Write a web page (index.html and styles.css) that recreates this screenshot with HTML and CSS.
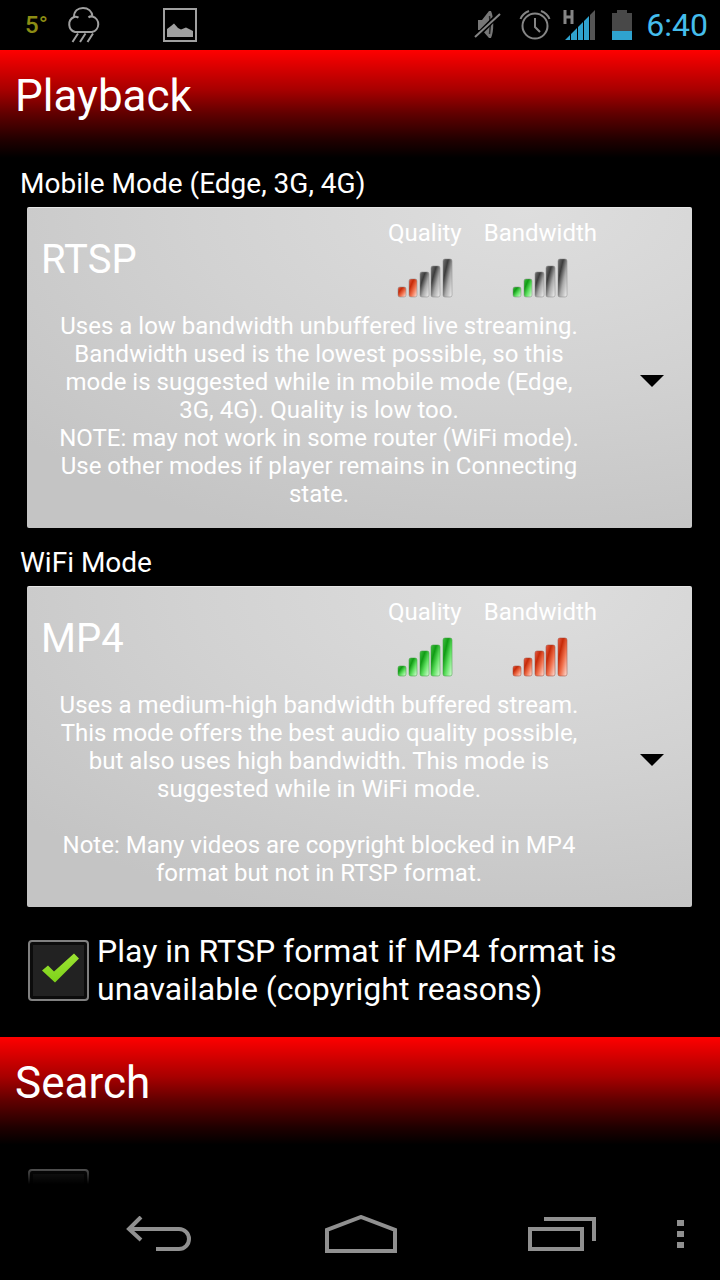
FILE: index.html
```html
<!DOCTYPE html>
<html lang="en">

<head>
  <meta charset="UTF-8" />
  <meta name="viewport" content="width=device-width, initial-scale=1.0" />
  <title>Settings</title>
  <link rel="stylesheet" href="styles.css">
</head>

<body>
  <!-- Shared gradients for the level bars -->
  <svg class="defs" width="0" height="0" aria-hidden="true">
    <defs>
      <linearGradient id="red" x1="0" y1="0" x2="1" y2="1">
        <stop offset="0" stop-color="#e8604a" />
        <stop offset="0.3" stop-color="#c62a08" />
        <stop offset="0.6" stop-color="#f0704c" />
        <stop offset="1" stop-color="#ffe4dc" />
      </linearGradient>
      <linearGradient id="green" x1="0" y1="0" x2="1" y2="1">
        <stop offset="0" stop-color="#45c045" />
        <stop offset="0.3" stop-color="#109c14" />
        <stop offset="0.6" stop-color="#5fe060" />
        <stop offset="1" stop-color="#dcffdc" />
      </linearGradient>
      <linearGradient id="grey" x1="0" y1="0" x2="1" y2="1">
        <stop offset="0" stop-color="#777" />
        <stop offset="0.3" stop-color="#3c3c3c" />
        <stop offset="0.6" stop-color="#aaa" />
        <stop offset="1" stop-color="#f4f4f4" />
      </linearGradient>
    </defs>
  </svg>

  <!-- Status bar -->
  <div class="status">
    <div class="notifications">
      <span class="temp">5°</span>
      <svg width="36" height="38" viewBox="0 0 36 38" fill="none" stroke="#a0a0a0" stroke-width="2">
        <path d="M9 26A8 8 0 0 1 8 11C8 5 12 2 17 2s9 3 9.500 8.500A8 8 0 0 1 26 26z" />
        <path d="M8 11c1.500-.5 3-.3 4.500.7M26.500 10.500c-1.500-.3-3 0-4 1M12 27.500L6.500 36M19.500 27.500L14 36M27 27.500L21.500 36" />
      </svg>
      <svg class="picture" width="34" height="34" viewBox="0 0 34 34">
        <path d="M1 1h32v32H1z" fill="none" stroke="#a0a0a0" stroke-width="2" />
        <path d="M4 29v-8l4-3 3-2.500 4 4.500 3 1.500 5-2 4 2 3 1.500v6z" fill="#a0a0a0" />
      </svg>
    </div>
    <div class="system">
      <svg width="28" height="32" viewBox="0 0 28 32">
        <path d="M4 11h4l7-9h2c3 6 3 21 0 27h-2l-7-8H4z" fill="#777" />
        <path d="M15.500 7c1 5 1 13 0 18" fill="none" stroke="#222" stroke-width="1.500" />
        <path d="M1 29L26 4" stroke="#000" stroke-width="5" />
        <path d="M1 28L26 5" stroke="#858585" stroke-width="2" />
      </svg>
      <svg class="alarm" width="32" height="32" viewBox="0 0 32 32" fill="none" stroke="#858585" stroke-width="2">
        <circle cx="16" cy="17" r="12.500" />
        <path d="M16 9v9l5 5M1.500 10C3 6 6 3.500 10 2M30.500 10C29 6 26 3.500 22 2" />
      </svg>
      <svg class="signal" width="34" height="32" viewBox="0 0 34 32">
        <path d="M3 1v14M10 1v14M3 8h7" fill="none" stroke="#858585" stroke-width="3" />
        <path d="M3 31l5-5v5zM9 25l6-6v12H9zM16 18l5-5v18h-5zM22 12l5-5v24h-5z" fill="#2fa3cf" />
        <path d="M28 6l5-5v30h-5z" fill="#555" />
      </svg>
      <svg class="battery" width="20" height="32" viewBox="0 0 20 32">
        <path d="M0 4h5V1h10v3h5v18H0z" fill="#484848" />
        <path d="M0 22h20v9H0z" fill="#2fa3cf" />
      </svg>
      <span class="clock">6:40</span>
    </div>
  </div>

  <main>
    <!-- Playback -->
    <h1>Playback</h1>
    <section class="modes">
      <label for="mobile">Mobile Mode (Edge, 3G, 4G)</label>
      <div class="spinner">
        <div class="content">
          <div class="top">
            <select id="mobile">
              <option selected>RTSP</option>
              <option>MP4</option>
            </select>
            <div class="level">
              <span>Quality</span>
              <svg width="56" height="40" viewBox="0 0 56 40" stroke="#888" stroke-opacity="0.5">
                <rect x="1" y="29" width="8" height="10" rx="2" fill="url(#red)" />
                <rect x="12" y="21" width="8" height="18" rx="2" fill="url(#red)" />
                <rect x="23" y="14" width="9" height="25" rx="2" fill="url(#grey)" />
                <rect x="34" y="8" width="9" height="31" rx="2" fill="url(#grey)" />
                <rect x="46" y="1" width="9" height="38" rx="2" fill="url(#grey)" />
              </svg>
            </div>
            <div class="level">
              <span>Bandwidth</span>
              <svg width="56" height="40" viewBox="0 0 56 40" stroke="#888" stroke-opacity="0.5">
                <rect x="1" y="29" width="8" height="10" rx="2" fill="url(#green)" />
                <rect x="12" y="21" width="8" height="18" rx="2" fill="url(#green)" />
                <rect x="23" y="14" width="9" height="25" rx="2" fill="url(#grey)" />
                <rect x="34" y="8" width="9" height="31" rx="2" fill="url(#grey)" />
                <rect x="46" y="1" width="9" height="38" rx="2" fill="url(#grey)" />
              </svg>
            </div>
          </div>
          <p>Uses a low bandwidth unbuffered live streaming. Bandwidth used is the lowest possible, so this mode is suggested while in mobile mode (Edge, 3G, 4G). Quality is low too.<br>
            NOTE: may not work in some router (WiFi mode). Use other modes if player remains in Connecting state.</p>
        </div>
        <svg class="arrow" width="24" height="12" viewBox="0 0 24 12"><path d="M0 0h24L12 12z" /></svg>
      </div>

      <label for="wifi">WiFi Mode</label>
      <div class="spinner">
        <div class="content">
          <div class="top">
            <select id="wifi">
              <option>RTSP</option>
              <option selected>MP4</option>
            </select>
            <div class="level">
              <span>Quality</span>
              <svg width="56" height="40" viewBox="0 0 56 40" fill="url(#green)" stroke="#3c9c3c" stroke-opacity="0.5">
                <rect x="1" y="29" width="8" height="10" rx="2" />
                <rect x="12" y="21" width="8" height="18" rx="2" />
                <rect x="23" y="14" width="9" height="25" rx="2" />
                <rect x="34" y="8" width="9" height="31" rx="2" />
                <rect x="46" y="1" width="9" height="38" rx="2" />
              </svg>
            </div>
            <div class="level">
              <span>Bandwidth</span>
              <svg width="56" height="40" viewBox="0 0 56 40" fill="url(#red)" stroke="#a04a3a" stroke-opacity="0.5">
                <rect x="1" y="29" width="8" height="10" rx="2" />
                <rect x="12" y="21" width="8" height="18" rx="2" />
                <rect x="23" y="14" width="9" height="25" rx="2" />
                <rect x="34" y="8" width="9" height="31" rx="2" />
                <rect x="46" y="1" width="9" height="38" rx="2" />
              </svg>
            </div>
          </div>
          <p>Uses a medium-high bandwidth buffered stream. This mode offers the best audio quality possible, but also uses high bandwidth. This mode is suggested while in WiFi mode.<br><br>
            Note: Many videos are copyright blocked in MP4 format but not in RTSP format.</p>
        </div>
        <svg class="arrow" width="24" height="12" viewBox="0 0 24 12"><path d="M0 0h24L12 12z" /></svg>
      </div>
    </section>
    <div class="check">
      <input type="checkbox" id="fallback" checked>
      <label for="fallback">Play in RTSP format if MP4 format is unavailable (copyright reasons)</label>
    </div>

    <!-- Search -->
    <h1>Search</h1>
    <div class="check">
      <input type="checkbox" aria-label="Search">
    </div>
  </main>

  <!-- Navigation bar -->
  <nav>
    <button class="back" aria-label="Back">
      <svg width="68" height="36" viewBox="0 0 68 36" fill="none" stroke="#909090" stroke-width="4">
        <path d="M3 13h50a10 10 0 0 1 0 20H30" />
        <path d="M15 1L3 13l12 11" />
      </svg>
    </button>
    <button class="home" aria-label="Home">
      <svg width="72" height="38" viewBox="0 0 72 38" fill="none" stroke="#909090" stroke-width="4">
        <path d="M2 36V15L36 2l34 13v21z" />
      </svg>
    </button>
    <button class="recent" aria-label="Recent apps">
      <svg width="68" height="36" viewBox="0 0 68 36" fill="none" stroke="#909090" stroke-width="4">
        <path d="M2 13h52v20H2zM16 3h50v22" />
      </svg>
    </button>
    <button class="menu" aria-label="Menu">
      <svg width="8" height="28" viewBox="0 0 8 28" fill="#909090">
        <path d="M0 0h7v6H0zM0 11h7v6H0zM0 22h7v6H0z" />
      </svg>
    </button>
  </nav>
</body>

</html>
```
FILE: styles.css
```css
* {
  box-sizing: border-box;
  margin: 0;
  padding: 0;
  font-family: Roboto, 'Noto Sans', sans-serif;
}

body {
  display: flex;
  flex-direction: column;
  height: 100vh;
  overflow: hidden;
  background-color: #000;
  color: #fff;
}

svg {
  display: block;
  flex: none;
}

.defs {
  position: absolute;
}

/* Status bar */
.status {
  display: flex;
  justify-content: space-between;
  align-items: center;
  flex: none;
  height: 50px;
  padding: 0 12px 0 25px;
}

.notifications,
.system {
  display: flex;
  align-items: center;
}

.temp {
  width: 41px;
  font-size: 24px;
  font-weight: 500;
  color: #8c8c14;
}

.picture {
  margin-left: 61px;
}

.alarm {
  margin-left: 17px;
}

.signal {
  margin-left: 11px;
}

.battery {
  margin-left: 16px;
}

.clock {
  margin-left: 14px;
  font-size: 32px;
  color: #45bdec;
}

/* Settings list */
main {
  position: relative;
  flex: 1;
  min-height: 0;
  overflow: hidden;
}

main::after {
  content: "";
  position: absolute;
  left: 0;
  right: 0;
  bottom: 0;
  height: 24px;
  background: linear-gradient(transparent, #000);
}

h1 {
  height: 110px;
  padding-left: 15px;
  font-size: 44px;
  font-weight: 400;
  line-height: 92px;
  background: linear-gradient(#ff0000, #f00000 6%, #a80000 36%, #600000 58%, #200000 82%, #000 98%);
}

.modes label {
  display: block;
  padding: 8px 20px 7px;
  font-size: 28px;
  line-height: 32px;
}

.spinner {
  display: flex;
  align-items: center;
  margin: 0 28px 11px 27px;
  padding: 11px 28px 20px 14px;
  background: radial-gradient(ellipse 100% 110% at 75% 0, #dedede, #d2d2d2 50%, #c4c4c4 100%);
  border-top: 1px solid #e6e6e6;
  border-radius: 2px;
}

.content {
  flex: 1;
}

.top {
  display: flex;
  gap: 22px;
  margin-bottom: 13px;
}

.spinner select {
  flex: 1;
  min-width: 0;
  height: 80px;
  appearance: none;
  border: none;
  background: none;
  color: #fff;
  font-size: 40px;
}

.spinner option {
  color: #000;
}

.level {
  display: flex;
  flex-direction: column;
  align-items: center;
  gap: 11px;
  font-size: 24px;
  line-height: 28px;
}

.content p {
  padding: 0 8px;
  font-size: 24px;
  line-height: 28px;
  text-align: center;
}

.arrow {
  margin: 34px 0 0 43px;
}

/* Checkbox rows */
.check {
  display: flex;
  align-items: center;
  gap: 8px;
  padding: 14px 28px 29px;
  font-size: 32px;
  line-height: 38px;
}

h1 + .check {
  padding-top: 22px;
}

.check input {
  flex: none;
  width: 61px;
  height: 61px;
  appearance: none;
  border: 2px solid #808080;
  border-radius: 4px;
  background-color: #222;
  box-shadow: inset 0 0 0 3px #0c0c0c;
}

.check input:checked::before {
  content: "";
  display: block;
  width: 57px;
  height: 57px;
  background: linear-gradient(#a8ea3c, #6cc80c);
  clip-path: polygon(12px 29px, 18px 24px, 24px 30px, 44px 12px, 49px 17px, 25px 41px);
}

/* Navigation bar */
nav {
  display: flex;
  align-items: center;
  justify-content: space-between;
  flex: none;
  height: 96px;
  padding: 4px 35px 0 126px;
}

nav button {
  border: none;
  background: none;
  cursor: pointer;
}

.recent {
  margin-right: -50px;
}
```
